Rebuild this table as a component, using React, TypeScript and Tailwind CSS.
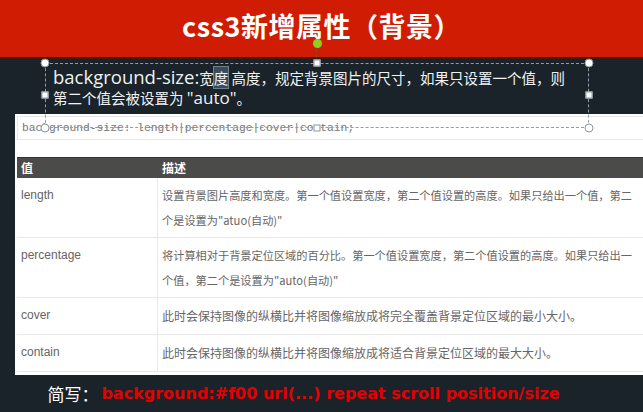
import React from 'react';

const rows = [
  {
    name: 'length',
    desc: ['设置背景图片高度和宽度。第一个值设置宽度，第二个值设置的高度。如果只给出一个值，第二', '个是设置为"atuo(自动)"'],
    h: 'h-[60px]',
    size: 'text-[11.2px]',
  },
  {
    name: 'percentage',
    desc: ['将计算相对于背景定位区域的百分比。第一个值设置宽度，第二个值设置的高度。如果只给出一', '个值，第二个是设置为"auto(自动)"'],
    h: 'h-[60px]',
    size: 'text-[11.2px]',
  },
  { name: 'cover', desc: ['此时会保持图像的纵横比并将图像缩放成将完全覆盖背景定位区域的最小大小。'], h: 'h-[37px]', size: 'text-[12px]' },
  { name: 'contain', desc: ['此时会保持图像的纵横比并将图像缩放成将适合背景定位区域的最大大小。'], h: 'h-[37px]', size: 'text-[12px]' },
];

// handles of the selected text box
const circles = [
  [45, 63],
  [589, 63],
  [45, 128],
  [589, 128],
];
const squares = [
  [317, 63],
  [45, 95],
  [589, 95],
  [317, 128],
];

export default function App() {
  return (
    <div className="relative w-[643px] h-[412px] overflow-hidden bg-[#1b232a] font-['Noto_Sans_CJK_SC',sans-serif]">
      {/* Title bar */}
      <div className="h-[59px] bg-[#d01c02] border-b-2 border-[#3a1e16] flex items-center justify-center pb-[4px]">
        <h1 className="text-white font-bold text-[27px] tracking-[0.5px] font-['Noto_Sans_CJK_SC',sans-serif]">
          css3新增属性（背景）
        </h1>
      </div>

      {/* Selected text */}
      <div className="pl-[53px] pt-[8px] text-[#eef2f3] text-[14.5px] leading-[20px]">
        <p className="whitespace-nowrap">
          <span className="font-['Open_Sans',sans-serif] text-[18.5px]">background-size:</span>
          宽<span className="bg-[#3c4b5a] outline outline-1 outline-[#6f808c]">度</span> 高度，规定背景图片的尺寸，如果只设置一个值，则
        </p>
        <p className="whitespace-nowrap">
          第二个值会被设置为 <span className="font-['Open_Sans',sans-serif] text-[17px]">"auto"</span>。
        </p>
      </div>

      {/* White panel */}
      <div className="mt-[6px] ml-[15px] h-[261px] bg-white p-[2px] pr-0 overflow-hidden">
        <div className="h-[24px] border border-[#e6e9ea] border-r-0 flex items-center pl-[4px]">
          <span className="font-['Liberation_Mono',monospace] text-[11.3px] text-[#777]">
            background-size: length|percentage|cover|contain;
          </span>
        </div>

        <div className="mt-[17px] text-[12px] font-['Noto_Sans_CJK_SC',sans-serif]">
          <div className="grid grid-cols-[141px_1fr] h-[21px] bg-[#4b4b49] text-white font-bold items-center border-t border-[#333]">
            <div className="pl-[4px]">值</div>
            <div className="pl-[4px]">描述</div>
          </div>
          {rows.map((r) => (
            <div key={r.name} className={`grid grid-cols-[141px_1fr] ${r.h} border-b border-[#e8e8e8] text-[#666]`}>
              <div className="pl-[4px] pt-[5px] border-r border-[#e8e8e8] font-['Liberation_Sans',sans-serif] text-[12px] leading-[25px]">
                {r.name}
              </div>
              <div className={`pl-[4px] pt-[5px] leading-[25px] whitespace-nowrap ${r.size}`}>
                {r.desc.map((d, i) => (
                  <div key={i} className="w-fit">
                    {d}
                  </div>
                ))}
              </div>
            </div>
          ))}
        </div>
      </div>

      {/* Footer */}
      <div className="flex items-center justify-center pt-[6px] pr-[36px] whitespace-nowrap">
        <span className="text-white text-[17px] mr-[3px]">简写：</span>
        <span className="text-[#e30000] font-bold text-[16px] font-['DejaVu_Sans',sans-serif]">
          background:#f00 url(...) repeat scroll position/size
        </span>
      </div>

      {/* Selection overlay */}
      <div className="absolute left-[45px] top-[63px] w-[544px] h-[65px] border border-dashed border-[#8f9ea6] pointer-events-none" />
      <div className="absolute left-[316px] top-[44px] w-0 h-[19px] border-l border-dashed border-[#7a4a3a]" />
      <div className="absolute left-[313px] top-[39px] w-[9px] h-[9px] rounded-full bg-[#8fcf1c]" />
      {circles.map(([x, y]) => (
        <div
          key={`c${x}-${y}`}
          className="absolute w-[9px] h-[9px] rounded-full bg-white border border-[#8a979d] -translate-x-1/2 -translate-y-1/2"
          style={{ left: x, top: y }}
        />
      ))}
      {squares.map(([x, y]) => (
        <div
          key={`s${x}-${y}`}
          className="absolute w-[7px] h-[7px] bg-white border border-[#8a979d] -translate-x-1/2 -translate-y-1/2"
          style={{ left: x, top: y }}
        />
      ))}
    </div>
  );
}
